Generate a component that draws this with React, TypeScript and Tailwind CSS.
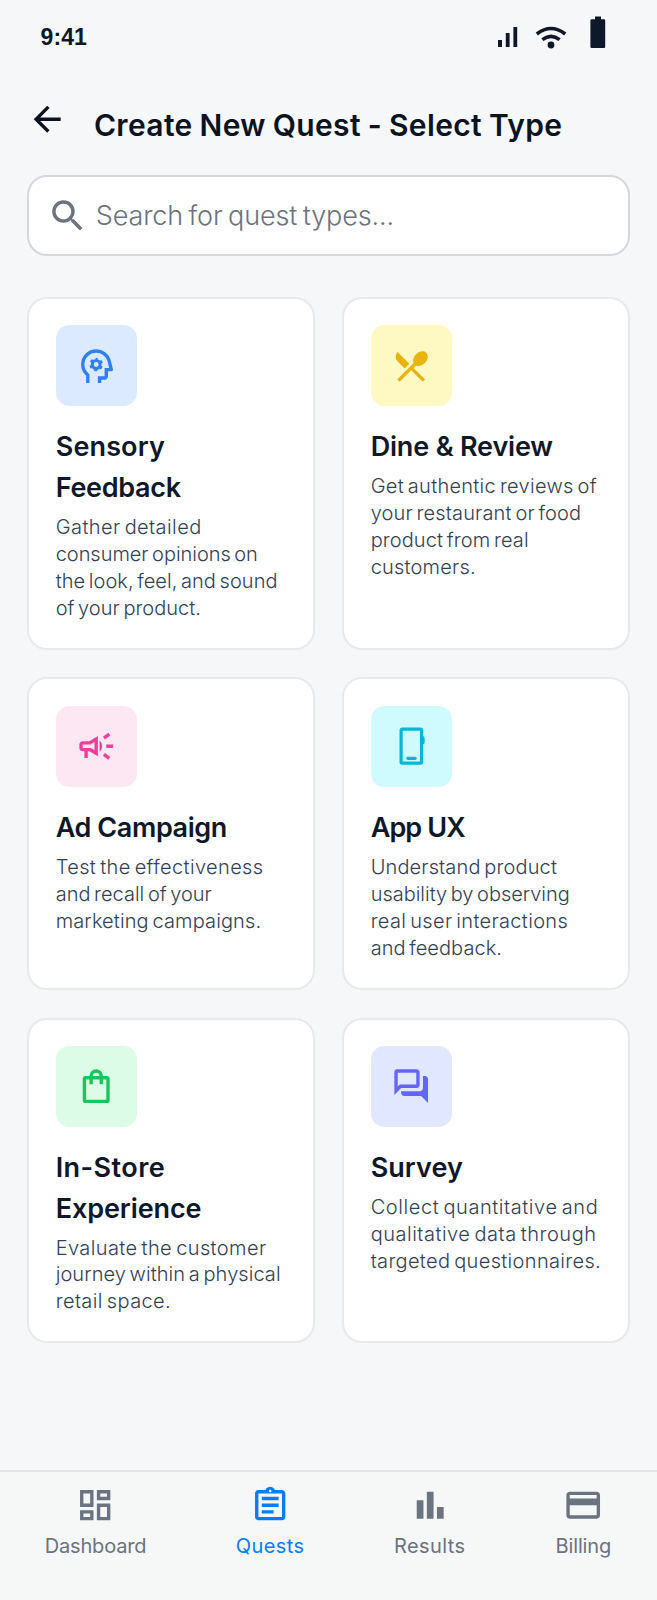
import React from "react";
import {
  MdArrowBack,
  MdSearch,
  MdRestaurantMenu,
  MdOutlineCampaign,
  MdOutlineDashboard,
  MdOutlineAssignment,
} from "react-icons/md";

type Line = [text: string, tracking: string];

interface QuestType {
  title: Line[];
  lines: Line[];
  tile: string;
  icon: React.ReactNode;
}

const svg = "h-[40.4px] w-[40.4px]";

function MindIcon() {
  return (
    <svg viewBox="0 -960 960 960" fill="currentColor" className={svg}>
      <path d="M240-80v-172q-57-52-88.5-121.5T120-520q0-150 105-255t255-105q125 0 221.5 73.5T827-615l52 205q5 19-7 34.5T840-360h-80v120q0 33-23.5 56.5T680-160h-80v80h-80v-160h160v-200h108l-38-155q-23-91-98-148t-172-57q-116 0-198 81t-82 197q0 60 24.5 114t69.5 96l26 24v208h-80Z" />
      <g fill="none" stroke="currentColor" transform="rotate(-90 480 -520)">
        <circle cx="480" cy="-520" r="94" strokeWidth="72" />
        <circle cx="480" cy="-520" r="140" strokeWidth="44" strokeDasharray="72 74.6" strokeDashoffset="36" />
      </g>
    </svg>
  );
}

function PhoneIcon() {
  return (
    <svg viewBox="0 0 24 24" fill="none" stroke="currentColor" strokeWidth="1.9" className={svg}>
      <rect x="6" y="1.8" width="12.2" height="20.3" rx="0.7" />
      <path d="M10 19.2h4.3" strokeLinecap="round" />
      <path d="M18.3 6.1h.9q.8.2.8 1v2.8q0 .8-.8 1h-.9z" fill="currentColor" stroke="none" />
    </svg>
  );
}

function BagIcon() {
  return (
    <svg viewBox="0 0 24 24" fill="none" stroke="currentColor" strokeWidth="2" className={svg}>
      <rect x="5" y="7" width="14" height="14" rx="0.7" />
      <path d="M9 10.9V6a3 3 0 0 1 6 0v4.9" />
    </svg>
  );
}

function ForumIcon() {
  return (
    <svg viewBox="0 0 24 24" fill="currentColor" className={svg}>
      <path d="M15 4v7H5.17L4 12.17V4h11m.2-2H3.6C2.7 2 2 2.7 2 3.6V17.2l4-4.1h9.2c1 0 1.8-.8 1.8-1.8V3.8c0-1-.8-1.8-1.8-1.8z" />
      <path d="M19 6h1.2c1 0 1.8.8 1.8 1.8V22l-4.1-4.1H8c-1.1 0-2-.9-2-2V15h11c1.1 0 2-.9 2-2z" />
    </svg>
  );
}

const quests: QuestType[] = [
  {
    title: [["Sensory", "tracking-[0.14px]"], ["Feedback", "tracking-[-0.3px]"]],
    lines: [
      ["Gather detailed", "tracking-[0.42px]"],
      ["consumer opinions on", "tracking-[-0.04px]"],
      ["the look, feel, and sound", "tracking-[0.04px]"],
      ["of your product.", "tracking-[0.02px]"],
    ],
    tile: "bg-[#dbeafe] text-[#2f80f7]",
    icon: <MindIcon />,
  },
  {
    title: [["Dine & Review", "tracking-[-0.17px]"]],
    lines: [
      ["Get authentic reviews of", "tracking-[0.28px]"],
      ["your restaurant or food", "tracking-[0.15px]"],
      ["product from real", "tracking-[0.1px]"],
      ["customers.", "tracking-[0.2px]"],
    ],
    tile: "bg-[#fef9c3] text-[#eab308]",
    icon: <MdRestaurantMenu className={svg} />,
  },
  {
    title: [["Ad Campaign", "tracking-[-0.4px]"]],
    lines: [
      ["Test the effectiveness", "tracking-[0.37px]"],
      ["and recall of your", "tracking-[0px]"],
      ["marketing campaigns.", "tracking-[0.12px]"],
    ],
    tile: "bg-[#fce7f3] text-[#ec3f9a]",
    icon: <MdOutlineCampaign className={svg} />,
  },
  {
    title: [["App UX", "tracking-[-0.9px]"]],
    lines: [
      ["Understand product", "tracking-[0.14px]"],
      ["usability by observing", "tracking-[-0.02px]"],
      ["real user interactions", "tracking-[0.33px]"],
      ["and feedback.", "tracking-[0.05px]"],
    ],
    tile: "bg-[#cffafe] text-[#06b6d4]",
    icon: <PhoneIcon />,
  },
  {
    title: [["In-Store", "tracking-[0.44px]"], ["Experience", "tracking-[-0.1px]"]],
    lines: [
      ["Evaluate the customer", "tracking-[0.4px]"],
      ["journey within a physical", "tracking-[0.06px]"],
      ["retail space.", "tracking-[0.38px]"],
    ],
    tile: "bg-[#dcfce7] text-[#1cc45c]",
    icon: <BagIcon />,
  },
  {
    title: [["Survey", "tracking-[0.05px]"]],
    lines: [
      ["Collect quantitative and", "tracking-[0.58px]"],
      ["qualitative data through", "tracking-[0.51px]"],
      ["targeted questionnaires.", "tracking-[0.33px]"],
    ],
    tile: "bg-[#e0e7ff] text-[#6366f1]",
    icon: <ForumIcon />,
  },
];

function StatusBar() {
  return (
    <header className="flex h-[75px] items-start justify-between pl-[40.5px] pr-[50px] text-[#0f172a]">
      <span className="mt-[25px] font-['Liberation_Sans',sans-serif] text-[23px] font-bold leading-[25px] tracking-[0.1px]">
        9:41
      </span>
      <svg viewBox="0 0 110 34" className="mt-[15px] h-[34px] w-[110px]" fill="currentColor">
        <path d="M1 25h4v7H1zM8.8 18h3.8v14H8.8zM16.4 12h3.8v20h-3.8z" />
        <path d="M39.8 19Q54 8 68.2 19" fill="none" stroke="currentColor" strokeWidth="3.6" />
        <path d="M45.4 24.6Q54 18.2 62.6 24.6" fill="none" stroke="currentColor" strokeWidth="3.6" />
        <circle cx="54" cy="30" r="3.4" />
        <path d="M98 1.6h6v2.7h3q1.2 0 1.2 1.2v26.3q0 1.2-1.2 1.2H94.6q-1.2 0-1.2-1.2V5.5q0-1.2 1.2-1.2H98z" />
      </svg>
    </header>
  );
}

function QuestCard({ quest }: { quest: QuestType }) {
  return (
    <article className="rounded-[20px] border-2 border-[#e7e9ec] bg-white px-[26.4px] pb-[26.1px] pt-[26.5px]">
      <div className={`flex h-[80.9px] w-[80.9px] items-center justify-center rounded-[13.5px] ${quest.tile}`}>
        {quest.icon}
      </div>
      <h2 className="mt-[21.2px] whitespace-nowrap text-[27px] font-semibold leading-[40.4px] text-[#0f172a]">
        {quest.title.map(([text, tracking]) => (
          <span key={text} className={`block ${tracking}`}>{text}</span>
        ))}
      </h2>
      <p className="mt-[5.6px] whitespace-nowrap text-[20px] font-light leading-[26.95px] text-[#334155] [word-spacing:-2px]">
        {quest.lines.map(([text, tracking]) => (
          <span key={text} className={`block ${tracking}`}>{text}</span>
        ))}
      </p>
    </article>
  );
}

function NavItem({ label, className, children }: { label: string; className: string; children: React.ReactNode }) {
  return (
    <a className={`flex flex-col items-center ${className}`}>
      {children}
      <span className="mt-[7px] text-[20px] leading-[27px]">{label}</span>
    </a>
  );
}

export default function App() {
  return (
    <div className="flex h-[1600px] w-[657px] flex-col overflow-hidden bg-[#f6f7f9] font-[Inter,sans-serif]">
      <StatusBar />
      <div className="flex h-[100px] items-start pl-[27.3px] text-[#0b1222]">
        <MdArrowBack className="mt-[24.3px] h-[40.4px] w-[40.4px]" />
        <h1 className="ml-[26.2px] mt-[29px] whitespace-nowrap text-[30px] font-semibold leading-[42px] tracking-[0.35px] [word-spacing:-1px]">
          Create New Quest - Select Type
        </h1>
      </div>
      <div className="mx-[27.3px] flex h-[81px] shrink-0 items-center rounded-[20px] border-2 border-[#d4d8dd] bg-white pl-[17.5px] pt-[1.5px] text-[#6b7280]">
        <MdSearch className="h-[41.6px] w-[41.6px]" />
        <span className="ml-[7.4px] whitespace-nowrap text-[27px] font-light leading-[40px] tracking-[-0.12px] [word-spacing:-2px]">
          Search for quest types...
        </span>
      </div>
      <main className="mx-[27.3px] mt-[40.8px] grid grid-cols-2 gap-x-[27.5px] gap-y-[27.7px]">
        {quests.map((quest) => (
          <QuestCard key={quest.lines[0][0]} quest={quest} />
        ))}
      </main>
      <nav className="mt-auto flex h-[130px] shrink-0 items-start justify-around border-t-2 border-[#e3e6e8] bg-[#f6f8f8] pr-[0.6px] pt-[13.3px] text-[#6b7280]">
        <NavItem label="Dashboard" className="w-[101px] tracking-[-0.15px]">
          <MdOutlineDashboard className={svg} />
        </NavItem>
        <NavItem label="Quests" className="w-[68px] tracking-[0.4px] text-[#0a7cf5]">
          <MdOutlineAssignment className={svg} />
        </NavItem>
        <NavItem label="Results" className="w-[71px] tracking-[0.4px]">
          <svg viewBox="0 0 24 24" fill="currentColor" className={svg}>
            <path d="M4 9h4v11H4zM16 13h4v7h-4zM10 4h4v16h-4z" />
          </svg>
        </NavItem>
        <NavItem label="Billing" className="w-[56px] tracking-[-0.1px]">
          <svg viewBox="0 0 24 24" fill="currentColor" className={svg}>
            <path d="M20 4H4c-1.11 0-1.99.89-1.99 2L2 18c0 1.11.89 2 2 2h16c1.11 0 2-.89 2-2V6c0-1.11-.89-2-2-2zm0 14H4v-6h16v6zm0-10H4V6h16v2z" />
          </svg>
        </NavItem>
      </nav>
    </div>
  );
}
